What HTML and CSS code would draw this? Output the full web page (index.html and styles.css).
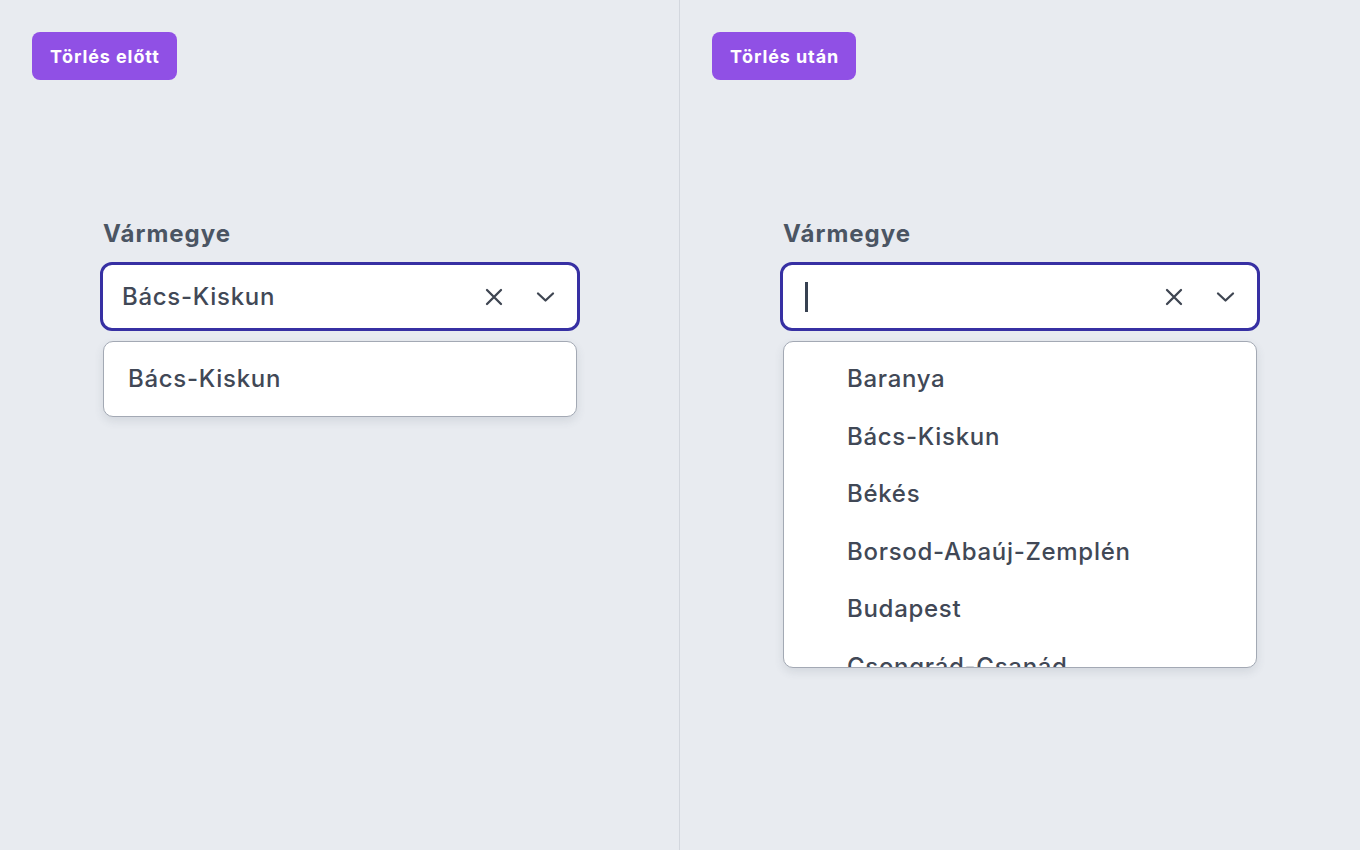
FILE: index.html
```html
<!DOCTYPE html>
<html lang="hu">
<head>
<meta charset="utf-8">
<title>Vármegye</title>
<link rel="stylesheet" href="styles.css">
</head>
<body>
<div class="page">
  <section class="panel panel-left">
    <span class="badge">Törlés előtt</span>
    <div class="field">
      <div class="label">Vármegye</div>
      <div class="control">
        <span class="value">Bács-Kiskun</span>
        <span class="icons">
          <svg class="icon-x" width="18" height="18" viewBox="0 0 18 18"><path d="M2 2L16 16M16 2L2 16" stroke="#3f4652" stroke-width="2.3" stroke-linecap="round" fill="none"/></svg>
          <svg class="icon-chev" width="19" height="12" viewBox="0 0 19 12"><path d="M2 2.5L9.5 9.5L17 2.5" stroke="#3f4652" stroke-width="2.3" stroke-linecap="round" stroke-linejoin="round" fill="none"/></svg>
        </span>
      </div>
      <ul class="menu menu-single">
        <li class="option">Bács-Kiskun</li>
      </ul>
    </div>
  </section>
  <section class="panel panel-right">
    <span class="badge">Törlés után</span>
    <div class="field">
      <div class="label">Vármegye</div>
      <div class="control">
        <span class="caret"></span>
        <span class="icons">
          <svg class="icon-x" width="18" height="18" viewBox="0 0 18 18"><path d="M2 2L16 16M16 2L2 16" stroke="#3f4652" stroke-width="2.3" stroke-linecap="round" fill="none"/></svg>
          <svg class="icon-chev" width="19" height="12" viewBox="0 0 19 12"><path d="M2 2.5L9.5 9.5L17 2.5" stroke="#3f4652" stroke-width="2.3" stroke-linecap="round" stroke-linejoin="round" fill="none"/></svg>
        </span>
      </div>
      <ul class="menu menu-list">
        <li class="option">Baranya</li>
        <li class="option">Bács-Kiskun</li>
        <li class="option">Békés</li>
        <li class="option">Borsod-Abaúj-Zemplén</li>
        <li class="option">Budapest</li>
        <li class="option">Csongrád-Csanád</li>
      </ul>
    </div>
  </section>
</div>
</body>
</html>
```
FILE: styles.css
```css
html, body {
  margin: 0;
  padding: 0;
}
body {
  background: #e8ebf0;
  font-family: Inter, "Noto Sans", "Liberation Sans", sans-serif;
  color: #4b5563;
  letter-spacing: 0.7px;
}
.page {
  display: flex;
  width: 1360px;
  height: 850px;
}
.panel {
  width: 680px;
  box-sizing: border-box;
  padding: 32px;
  display: flex;
  flex-direction: column;
  align-items: flex-start;
}
.panel-left {
  border-right: 1px solid #d3d7de;
}
.badge {
  display: inline-block;
  height: 48px;
  line-height: 49px;
  padding: 0 17px 0 18px;
  background: #9050e5;
  color: #ffffff;
  font-weight: 700;
  font-size: 18px;
  letter-spacing: 0.9px;
  border-radius: 8px;
}
.field {
  margin-top: 140px;
  margin-left: 68px;
  width: 480px;
}
.label {
  font-size: 24px;
  line-height: 28px;
  font-weight: 700;
  color: #4b5563;
  letter-spacing: 1px;
  padding-left: 3px;
  margin-bottom: 14px;
}
.control {
  box-sizing: border-box;
  height: 69px;
  border: 3px solid #3730a3;
  border-radius: 12px;
  background: #ffffff;
  display: flex;
  align-items: center;
  padding: 0 22px 0 19px;
}
.value {
  flex: 1;
  font-size: 24px;
  font-weight: 500;
  color: #414856;
}
.caret {
  display: block;
  width: 2.5px;
  height: 30px;
  background: #374151;
  margin-left: 3px;
  margin-top: 1px;
}
.icons {
  margin-left: auto;
  display: flex;
  align-items: center;
  gap: 33px;
}
.icon-x, .icon-chev {
  display: block;
}
.menu {
  list-style: none;
  margin: 10px 3px 0;
  padding: 8px 0;
  background: #ffffff;
  border: 1px solid #a3a9b4;
  border-radius: 10px;
  box-shadow: 0 4px 10px rgba(60, 70, 90, 0.12);
  overflow: hidden;
}
.option {
  height: 57.5px;
  display: flex;
  align-items: center;
  font-size: 24px;
  font-weight: 500;
  color: #414856;
  padding-left: 24px;
}
.menu-list {
  box-sizing: border-box;
  height: 327px;
}
.menu-list .option {
  padding-left: 63px;
}
```
